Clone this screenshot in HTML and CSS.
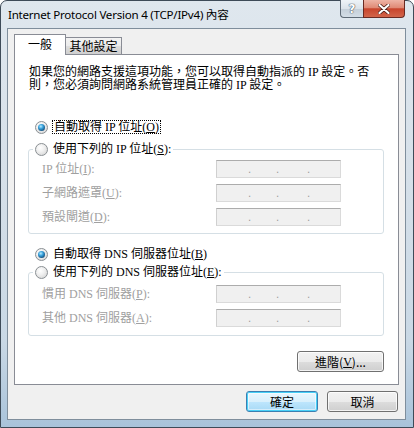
FILE: index.html
```html
<!DOCTYPE html>
<html lang="zh-Hant">
<head>
<meta charset="utf-8">
<link rel="stylesheet" href="styles.css">
</head>
<body>
<div class="window">
  <div class="titlebar">
    <div class="title">Internet Protocol Version 4 (TCP/IPv4) 內容</div>
    <div class="caption-btns">
      <div class="cbtn help">?</div>
      <div class="cbtn close">
        <svg width="12" height="10" viewBox="0 0 12 10"><path d="M1.5 1 L10.5 9 M10.5 1 L1.5 9" stroke="#4a1d16" stroke-width="3.6" stroke-linecap="round"/><path d="M1.5 1 L10.5 9 M10.5 1 L1.5 9" stroke="#ffffff" stroke-width="2.2" stroke-linecap="round"/></svg>
      </div>
    </div>
  </div>
  <div class="client">
    <div class="tabs">
      <div class="tab active">一般</div>
      <div class="tab">其他設定</div>
    </div>
    <div class="panel">
      <p class="desc">如果您的網路支援這項功能，您可以取得自動指派的 IP 設定。否<br>則，您必須詢問網路系統管理員正確的 IP 設定。</p>
      <div class="radio-row ip-auto"><span class="radio checked"></span><span class="focus">自動取得 IP 位址(<u>O</u>)</span></div>
      <fieldset class="group ip-group">
        <legend><span class="radio"></span><span>使用下列的 IP 位址(<u>S</u>):</span></legend>
        <div class="fields">
          <span class="lbl">IP 位址(<u>I</u>):</span>
          <div class="ipbox"><span class="seg s1"></span><span class="dot">.</span><span class="seg s2"></span><span class="dot">.</span><span class="seg s3"></span><span class="dot">.</span></div>
          <span class="lbl">子網路遮罩(<u>U</u>):</span>
          <div class="ipbox"><span class="seg s1"></span><span class="dot">.</span><span class="seg s2"></span><span class="dot">.</span><span class="seg s3"></span><span class="dot">.</span></div>
          <span class="lbl">預設閘道(<u>D</u>):</span>
          <div class="ipbox"><span class="seg s1"></span><span class="dot">.</span><span class="seg s2"></span><span class="dot">.</span><span class="seg s3"></span><span class="dot">.</span></div>
        </div>
      </fieldset>
      <div class="radio-row dns-auto"><span class="radio checked"></span><span class="plain">自動取得 DNS 伺服器位址(<u>B</u>)</span></div>
      <fieldset class="group dns-group">
        <legend><span class="radio"></span><span>使用下列的 DNS 伺服器位址(<u>E</u>):</span></legend>
        <div class="fields">
          <span class="lbl">慣用 DNS 伺服器(<u>P</u>):</span>
          <div class="ipbox"><span class="seg s1"></span><span class="dot">.</span><span class="seg s2"></span><span class="dot">.</span><span class="seg s3"></span><span class="dot">.</span></div>
          <span class="lbl">其他 DNS 伺服器(<u>A</u>):</span>
          <div class="ipbox"><span class="seg s1"></span><span class="dot">.</span><span class="seg s2"></span><span class="dot">.</span><span class="seg s3"></span><span class="dot">.</span></div>
        </div>
      </fieldset>
      <div class="adv-row"><button class="btn adv">進階(<u>V</u>)...</button></div>
    </div>
    <div class="dialog-btns">
      <button class="btn default ok">確定</button>
      <button class="btn cancel">取消</button>
    </div>
  </div>
</div>
</body>
</html>
```
FILE: styles.css
```css
* { box-sizing: border-box; }
html, body { margin: 0; padding: 0; }
body {
  width: 414px;
  height: 428px;
  overflow: hidden;
  background: #ffffff;
  font-family: "Liberation Serif", "Noto Sans CJK TC", serif;
  font-size: 12px;
  color: #000;
}
u { text-decoration: underline; text-underline-offset: 1px; }

.window {
  width: 414px;
  height: 428px;
  display: flex;
  flex-direction: column;
  padding: 0 7px 7px 6px;
  border: 1px solid #3e4b58;
  border-radius: 7px 7px 0 0;
  background: linear-gradient(180deg, #dfe7ee 0%, #d6e0e9 40%, #c9d8e5 80%, #a9c3da 100%);
}

.titlebar {
  height: 27px;
  display: flex;
  align-items: flex-start;
}
.title {
  font-family: "Noto Sans", "Noto Sans CJK TC", sans-serif;
  font-size: 11.6px;
  line-height: 16px;
  margin: 6px 0 0 1px;
  letter-spacing: -0.25px;
}
.caption-btns {
  margin-left: auto;
  margin-top: -1px;
  margin-right: 1px;
  display: flex;
}
.cbtn {
  height: 18px;
  display: flex;
  align-items: center;
  justify-content: center;
  border: 1px solid #5e6a76;
  border-top: none;
}
.help {
  width: 23px;
  border-radius: 0 0 0 4px;
  border-right: none;
  background: linear-gradient(180deg, #eef3f7 0%, #dbe3ea 50%, #c3ced8 51%, #d3dde6 100%);
  font-family: "DejaVu Sans", sans-serif;
  font-weight: bold;
  font-size: 12px;
  color: #ffffff;
  text-shadow: 0 0 1px #4d5966, 0 0 1px #4d5966, 0 0 1px #4d5966;
}
.close {
  width: 42px;
  border-radius: 0 0 4px 0;
  border-color: #6a2a22;
  background: linear-gradient(180deg, #eeb4a6 0%, #e08a76 45%, #c8452d 52%, #d2654a 100%);
}

.client {
  flex: 1;
  display: flex;
  flex-direction: column;
  background: #f0f0f0;
  border: 1px solid #7f8e9c;
  padding: 5px 6px 7px 6px;
}

.tabs {
  display: flex;
  align-items: flex-end;
  height: 20px;
}
.tab {
  font-family: "Noto Sans CJK TC", sans-serif;
  line-height: 14px;
  border: 1px solid #898c95;
  border-bottom: none;
  display: flex;
  align-items: center;
  justify-content: center;
}
.tab.active {
  position: relative;
  z-index: 1;
  width: 52px;
  height: 21px;
  margin-bottom: -1px;
  background: #ffffff;
  padding-bottom: 3px;
}
.tab:not(.active) {
  width: 57px;
  height: 17px;
  margin-left: -1px;
  background: linear-gradient(180deg, #f3f3f3 0%, #ebebeb 50%, #dddddd 51%, #cfcfcf 100%);
}

.panel {
  flex: 1;
  background: #ffffff;
  border: 1px solid #898c95;
  padding: 11px 14px 0 14px;
  display: flex;
  flex-direction: column;
}
.desc {
  margin: 0;
  line-height: 13px;
  white-space: nowrap;
}

.radio-row {
  display: flex;
  align-items: center;
  height: 14px;
  line-height: 14px;
  padding-left: 6px;
}
.ip-auto { margin-top: 28px; }
.dns-auto { margin-top: 13px; }

.radio {
  width: 13px;
  height: 13px;
  flex: none;
  border-radius: 50%;
  border: 1px solid #8a8f93;
  background: radial-gradient(circle at 40% 35%, #ffffff 0%, #f0f0f0 40%, #cfcfcf 100%);
  display: flex;
  align-items: center;
  justify-content: center;
  margin-right: 5px;
}
.radio.checked::after {
  content: "";
  width: 7px;
  height: 7px;
  border-radius: 50%;
  background: radial-gradient(circle at 40% 35%, #b8ecff 0%, #3aa3dd 35%, #14517f 75%, #0d3556 100%);
}
.focus {
  border: 1px dotted #000;
  padding: 0 1px;
  margin-left: -1px;
  line-height: 12px;
}
.plain { line-height: 14px; }

.group {
  margin: 0 0 0 -1px;
  border: 1px solid #d5dfe5;
  border-radius: 3px;
  padding: 4px 0 7px 13px;
  min-width: 0;
}
.ip-group { margin-top: 8px; }
.dns-group { margin-top: 4px; padding-top: 6px; padding-bottom: 8px; }
.group legend {
  display: flex;
  align-items: center;
  height: 14px;
  line-height: 14px;
  padding: 0 2px;
  margin-left: -9px;
}

.fields {
  display: grid;
  grid-template-columns: 174px 125px;
  grid-auto-rows: 18px;
  row-gap: 6px;
}
.lbl {
  color: #a0a0a0;
  display: flex;
  align-items: center;
  line-height: 14px;
}
.ipbox {
  display: flex;
  align-items: flex-end;
  background: #f0f0f0;
  border: 1px solid #dadada;
  border-top-color: #acacac;
  border-left-color: #d0d0d0;
  padding-bottom: 2px;
  font-family: "DejaVu Sans", sans-serif;
  font-size: 10px;
  line-height: 10px;
  color: #9c9c9c;
}
.seg { display: block; }
.s1 { width: 31px; }
.s2 { width: 25px; }
.s3 { width: 28px; }
.dot { width: 3px; }

.adv-row {
  display: flex;
  justify-content: flex-end;
  margin-top: 15px;
}
.btn {
  font-family: "Noto Sans CJK TC", "Liberation Serif", sans-serif;
  font-size: 12px;
  color: #000;
  height: 21px;
  padding: 0;
  border: 1px solid #707070;
  border-radius: 3px;
  background: linear-gradient(180deg, #f2f2f2 0%, #ebebeb 50%, #dddddd 51%, #cfcfcf 100%);
  box-shadow: inset 0 0 0 1px rgba(255, 255, 255, 0.75);
  display: flex;
  align-items: center;
  justify-content: center;
  line-height: 14px;
}
.btn u { font-family: "Liberation Serif", serif; }
.adv { width: 87px; }

.dialog-btns {
  display: flex;
  justify-content: flex-end;
  gap: 9px;
  margin-top: 6px;
  margin-right: 1px;
}
.ok { width: 72px; }
.cancel { width: 71px; }
.btn.default {
  border-color: #3c7fb1;
  background: linear-gradient(180deg, #eaf6fd 0%, #d9f0fc 50%, #bee6fd 51%, #a7d9f5 100%);
  box-shadow: inset 0 0 0 1px #48d0f7, inset 0 0 0 2px rgba(255,255,255,0.5);
}
```
